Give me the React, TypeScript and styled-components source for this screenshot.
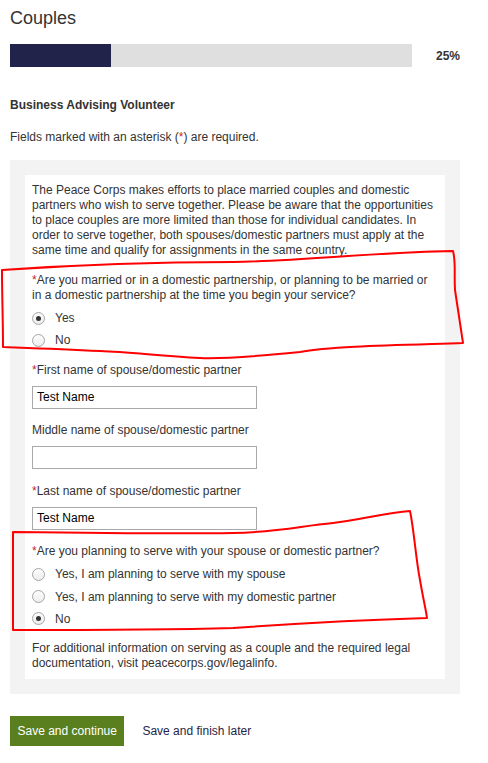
import React from 'react';
import styled, { createGlobalStyle } from 'styled-components';

const GlobalStyle = createGlobalStyle`
    html, body {
        margin: 0;
        padding: 0;
        background: #ffffff;
    }
    body {
        font-family: 'Liberation Sans', Arial, sans-serif;
        color: #333333;
        font-size: 12px;
    }
`;

const Page = styled.div`
    position: relative;
    width: 488px;
    min-height: 763px;
    padding: 8px 28px 0 10px;
    box-sizing: border-box;
`;

const Title = styled.h1`
    margin: 0;
    font-size: 18px;
    font-weight: normal;
    line-height: 21px;
    color: #333333;
`;

const ProgressRow = styled.div`
    display: grid;
    grid-template-columns: 402px auto;
    column-gap: 24px;
    align-items: center;
    margin-top: 15px;
`;

const Track = styled.div`
    height: 23px;
    background: #dfdfdf;
`;

const Fill = styled.div`
    height: 100%;
    background: #22234b;
`;

const Percent = styled.span`
    font-size: 12px;
    font-weight: bold;
    color: #333333;
`;

const Heading = styled.h2`
    margin: 31px 0 0;
    font-size: 12px;
    font-weight: bold;
    line-height: 15px;
`;

const Text = styled.p<{ $top?: number }>`
    margin: ${(p) => p.$top ?? 0}px 0 0;
    font-size: 12px;
    line-height: 15px;
`;

const Req = styled.span`
    color: #c0282d;
`;

const Panel = styled.div`
    margin-top: 15px;
    padding: 15px;
    background: #f3f3f3;
`;

const Card = styled.div`
    background: #ffffff;
    padding: 8px 8px 8px 7px;
`;

const RadioGroup = styled.div`
    margin: 4px 0 11px;
`;

const RadioRow = styled.label`
    display: flex;
    align-items: center;
    gap: 10px;
    height: 22.3px;
    font-size: 12px;
`;

const RadioCircle = styled.span<{ $checked?: boolean }>`
    position: relative;
    width: 13px;
    height: 13px;
    border-radius: 50%;
    border: 1px solid #a6a6a6;
    background: linear-gradient(#fdfdfd, #ececec);
    box-sizing: border-box;
    flex: none;

    &::after {
        content: '';
        display: ${(p) => (p.$checked ? 'block' : 'none')};
        position: absolute;
        left: 3px;
        top: 3px;
        width: 5px;
        height: 5px;
        border-radius: 50%;
        background: #333333;
    }
`;

const Field = styled.div`
    margin-bottom: 14.5px;
`;

const Input = styled.div`
    margin-top: 8px;
    width: 225px;
    height: 23px;
    border: 1px solid #a9a9a9;
    box-sizing: border-box;
    padding-left: 4px;
    display: flex;
    align-items: center;
    font-size: 12px;
    color: #000000;
`;

const Actions = styled.div`
    display: flex;
    align-items: center;
    gap: 18px;
    margin-top: 22px;
`;

const PrimaryButton = styled.button`
    height: 30px;
    padding: 0 7.5px;
    border: none;
    background: #5a7f1e;
    color: #ffffff;
    font-family: 'Liberation Sans', Arial, sans-serif;
    font-size: 12px;
`;

const LinkButton = styled.span`
    font-size: 12px;
    color: #1f2448;
`;

const Scribbles = styled.svg`
    position: absolute;
    left: 0;
    top: 0;
    pointer-events: none;
`;

type Option = { label: string; checked?: boolean };

const Radios = ({ options }: { options: Option[] }) => (
    <RadioGroup>
        {options.map((o) => (
            <RadioRow key={o.label}>
                <RadioCircle $checked={o.checked} />
                {o.label}
            </RadioRow>
        ))}
    </RadioGroup>
);

const NameField = ({ label, value, required }: { label: string; value: string; required?: boolean }) => (
    <Field>
        <Text>
            {required && <Req>*</Req>}
            {label}
        </Text>
        <Input>{value}</Input>
    </Field>
);

const App = () => {
    const progress = 25;

    return (
        <Page>
            <GlobalStyle />
            <Title>Couples</Title>
            <ProgressRow>
                <Track>
                    <Fill style={{ width: `${progress}%` }} />
                </Track>
                <Percent>{progress}%</Percent>
            </ProgressRow>
            <Heading>Business Advising Volunteer</Heading>
            <Text $top={17}>
                Fields marked with an asterisk (<Req>*</Req>) are required.
            </Text>
            <Panel>
                <Card>
                    <Text>
                        The Peace Corps makes efforts to place married couples and domestic partners who wish to
                        serve together. Please be aware that the opportunities to place couples are more limited than
                        those for individual candidates. In order to serve together, both spouses/domestic partners
                        must apply at the same time and qualify for assignments in the same country.
                    </Text>
                    <Text $top={15}>
                        <Req>*</Req>Are you married or in a domestic partnership, or planning to be married or in a
                        domestic partnership at the time you begin your service?
                    </Text>
                    <Radios options={[{ label: 'Yes', checked: true }, { label: 'No' }]} />
                    <NameField label="First name of spouse/domestic partner" value="Test Name" required />
                    <NameField label="Middle name of spouse/domestic partner" value="" />
                    <NameField label="Last name of spouse/domestic partner" value="Test Name" required />
                    <Text $top={0.5}>
                        <Req>*</Req>Are you planning to serve with your spouse or domestic partner?
                    </Text>
                    <Radios
                        options={[
                            { label: 'Yes, I am planning to serve with my spouse' },
                            { label: 'Yes, I am planning to serve with my domestic partner' },
                            { label: 'No', checked: true },
                        ]}
                    />
                    <Text>
                        For additional information on serving as a couple and the required legal documentation, visit
                        peacecorps.gov/legalinfo.
                    </Text>
                </Card>
            </Panel>
            <Actions>
                <PrimaryButton>Save and continue</PrimaryButton>
                <LinkButton>Save and finish later</LinkButton>
            </Actions>
            <Scribbles width="488" height="763" viewBox="0 0 488 763">
                <path
                    d="M2 270 C60 266 150 262 233 262 C300 261 380 252 453 251 C456 262 454 272 455 290 C458 310 461 330 463 343 C400 345 330 346 300 352 C260 356 220 359 200 358 C160 356 130 352 100 351 C60 349 30 348 3 347 C3 320 2 295 2 270 Z"
                    fill="none"
                    stroke="#ff0000"
                    strokeWidth="2"
                    strokeLinejoin="round"
                />
                <path
                    d="M13 532 C90 533 170 534 233 533 C280 532 300 526 333 523 C360 520 385 513 410 511 C414 530 416 560 420 580 C423 598 426 610 427 618 C360 620 290 624 233 628 C160 630 80 630 13 630 C13 600 13 560 13 532 Z"
                    fill="none"
                    stroke="#ff0000"
                    strokeWidth="2"
                    strokeLinejoin="round"
                />
            </Scribbles>
        </Page>
    );
};

export default App;
